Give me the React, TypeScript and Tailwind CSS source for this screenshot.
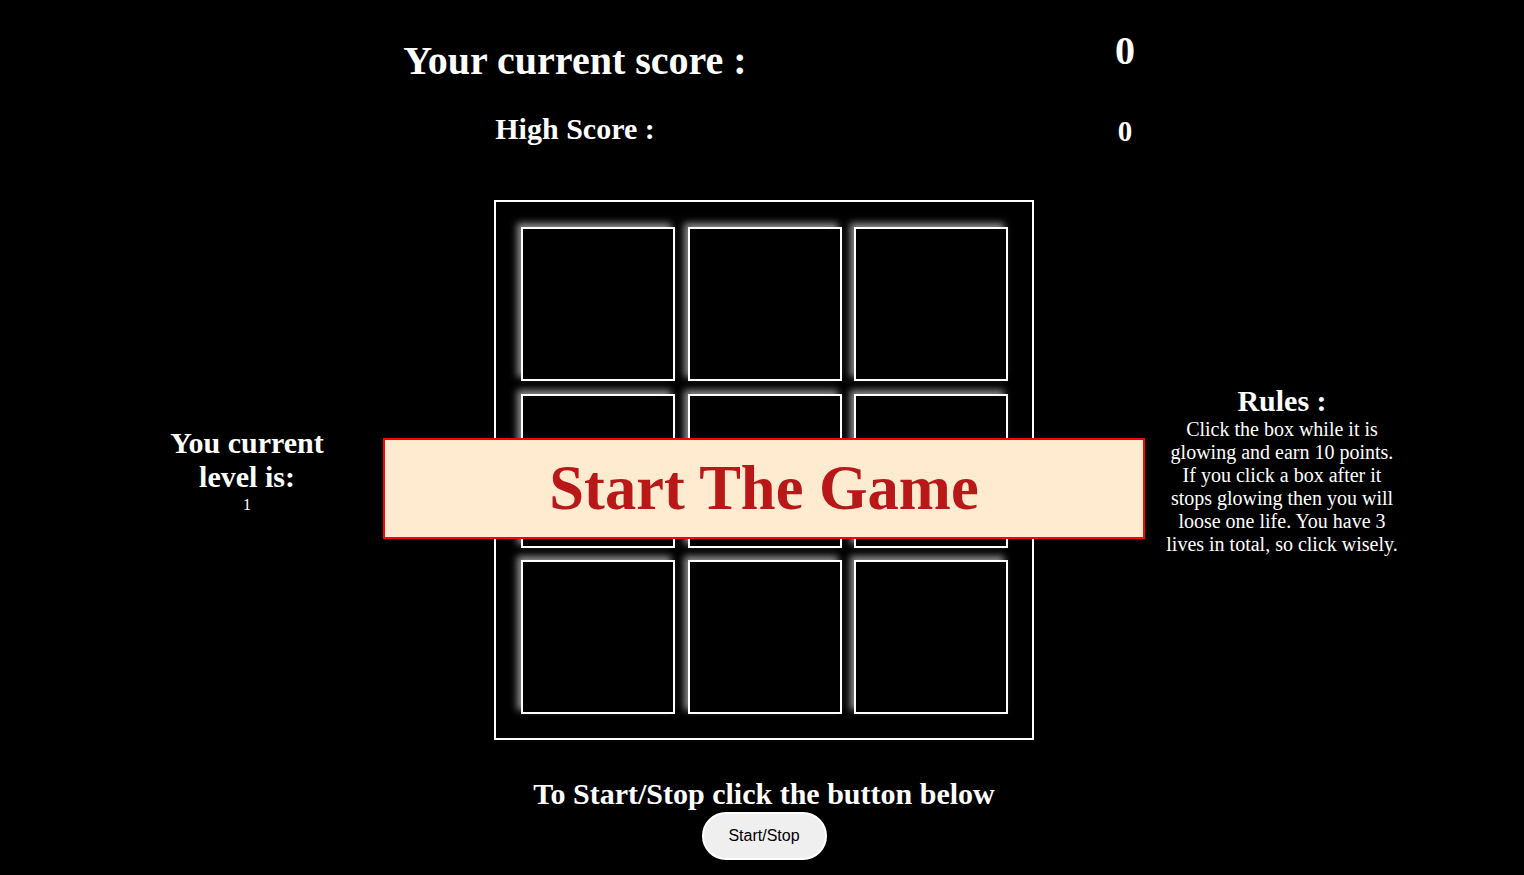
import React from "react";

const serif = "font-['Liberation_Serif','Times_New_Roman',serif]";

function Box() {
  return (
    <div className="w-[154px] h-[154px] border-2 border-white bg-black shadow-[-4px_-4px_7px_rgba(255,255,255,0.55)]" />
  );
}

export default function App() {
  return (
    <div className={`min-h-screen w-full bg-black text-white ${serif}`}>
      {/* Row 1 */}
      <div className="flex h-[100px] pl-[75px]">
        <div className="w-[1000px] text-center mt-[41px] text-[40px] leading-none font-bold">
          Your current score :
        </div>
        <div className="w-[100px] text-center mt-[31px] text-[40px] leading-none font-bold">0</div>
      </div>
      {/* Row 2 */}
      <div className="flex h-[100px] pl-[75px]">
        <div className="w-[1000px] text-center mt-[14px] text-[30px] leading-none font-bold">
          High Score :
        </div>
        <div className="w-[100px] text-center mt-[17px] text-[29px] leading-none font-bold">0</div>
      </div>

      {/* Main */}
      <div className="flex items-center h-[540px]">
        <div className="w-[494px] flex flex-col items-center text-center">
          <div className="text-[30px] leading-[34px] font-bold">
            You current
            <br />
            level is:
          </div>
          <div className="mt-[2px] text-[16px] leading-[18px]">1</div>
        </div>

        <div className="relative w-[540px] h-[540px] border-2 border-white">
          <div className="grid grid-cols-[154px_154px_154px] gap-[12.5px] pl-[25px] pt-[25px]">
            <Box />
            <Box />
            <Box />
            <Box />
            <Box />
            <Box />
            <Box />
            <Box />
            <Box />
          </div>
          <div className="absolute left-[-113px] top-[236px] w-[762px] h-[101px] border-2 border-[#ff0000] bg-[#ffebcf] flex items-center justify-center">
            <span className="text-[62.5px] leading-none font-bold text-[#b81818]">Start The Game</span>
          </div>
        </div>

        <div className="flex-1 flex justify-center pl-[6px]">
          <div className="text-center">
            <div className="text-[30px] font-bold leading-[34.5px]">Rules :</div>
            <div className="text-[20px] leading-[23px] whitespace-nowrap">
              Click the box while it is
              <br />
              glowing and earn 10 points.
              <br />
              If you click a box after it
              <br />
              stops glowing then you will
              <br />
              loose one life. You have 3
              <br />
              lives in total, so click wisely.
            </div>
          </div>
        </div>
      </div>

      {/* Bottom */}
      <div className="flex flex-col items-center pl-[4px]">
        <div className="mt-[39px] text-[30px] leading-none font-bold">
          To Start/Stop click the button below
        </div>
        <button className="mt-[3px] w-[125px] h-[48px] rounded-full bg-[#efefef] border-2 border-white text-black text-[16px] font-['Liberation_Sans',Arial,sans-serif]">
          Start/Stop
        </button>
      </div>
    </div>
  );
}
